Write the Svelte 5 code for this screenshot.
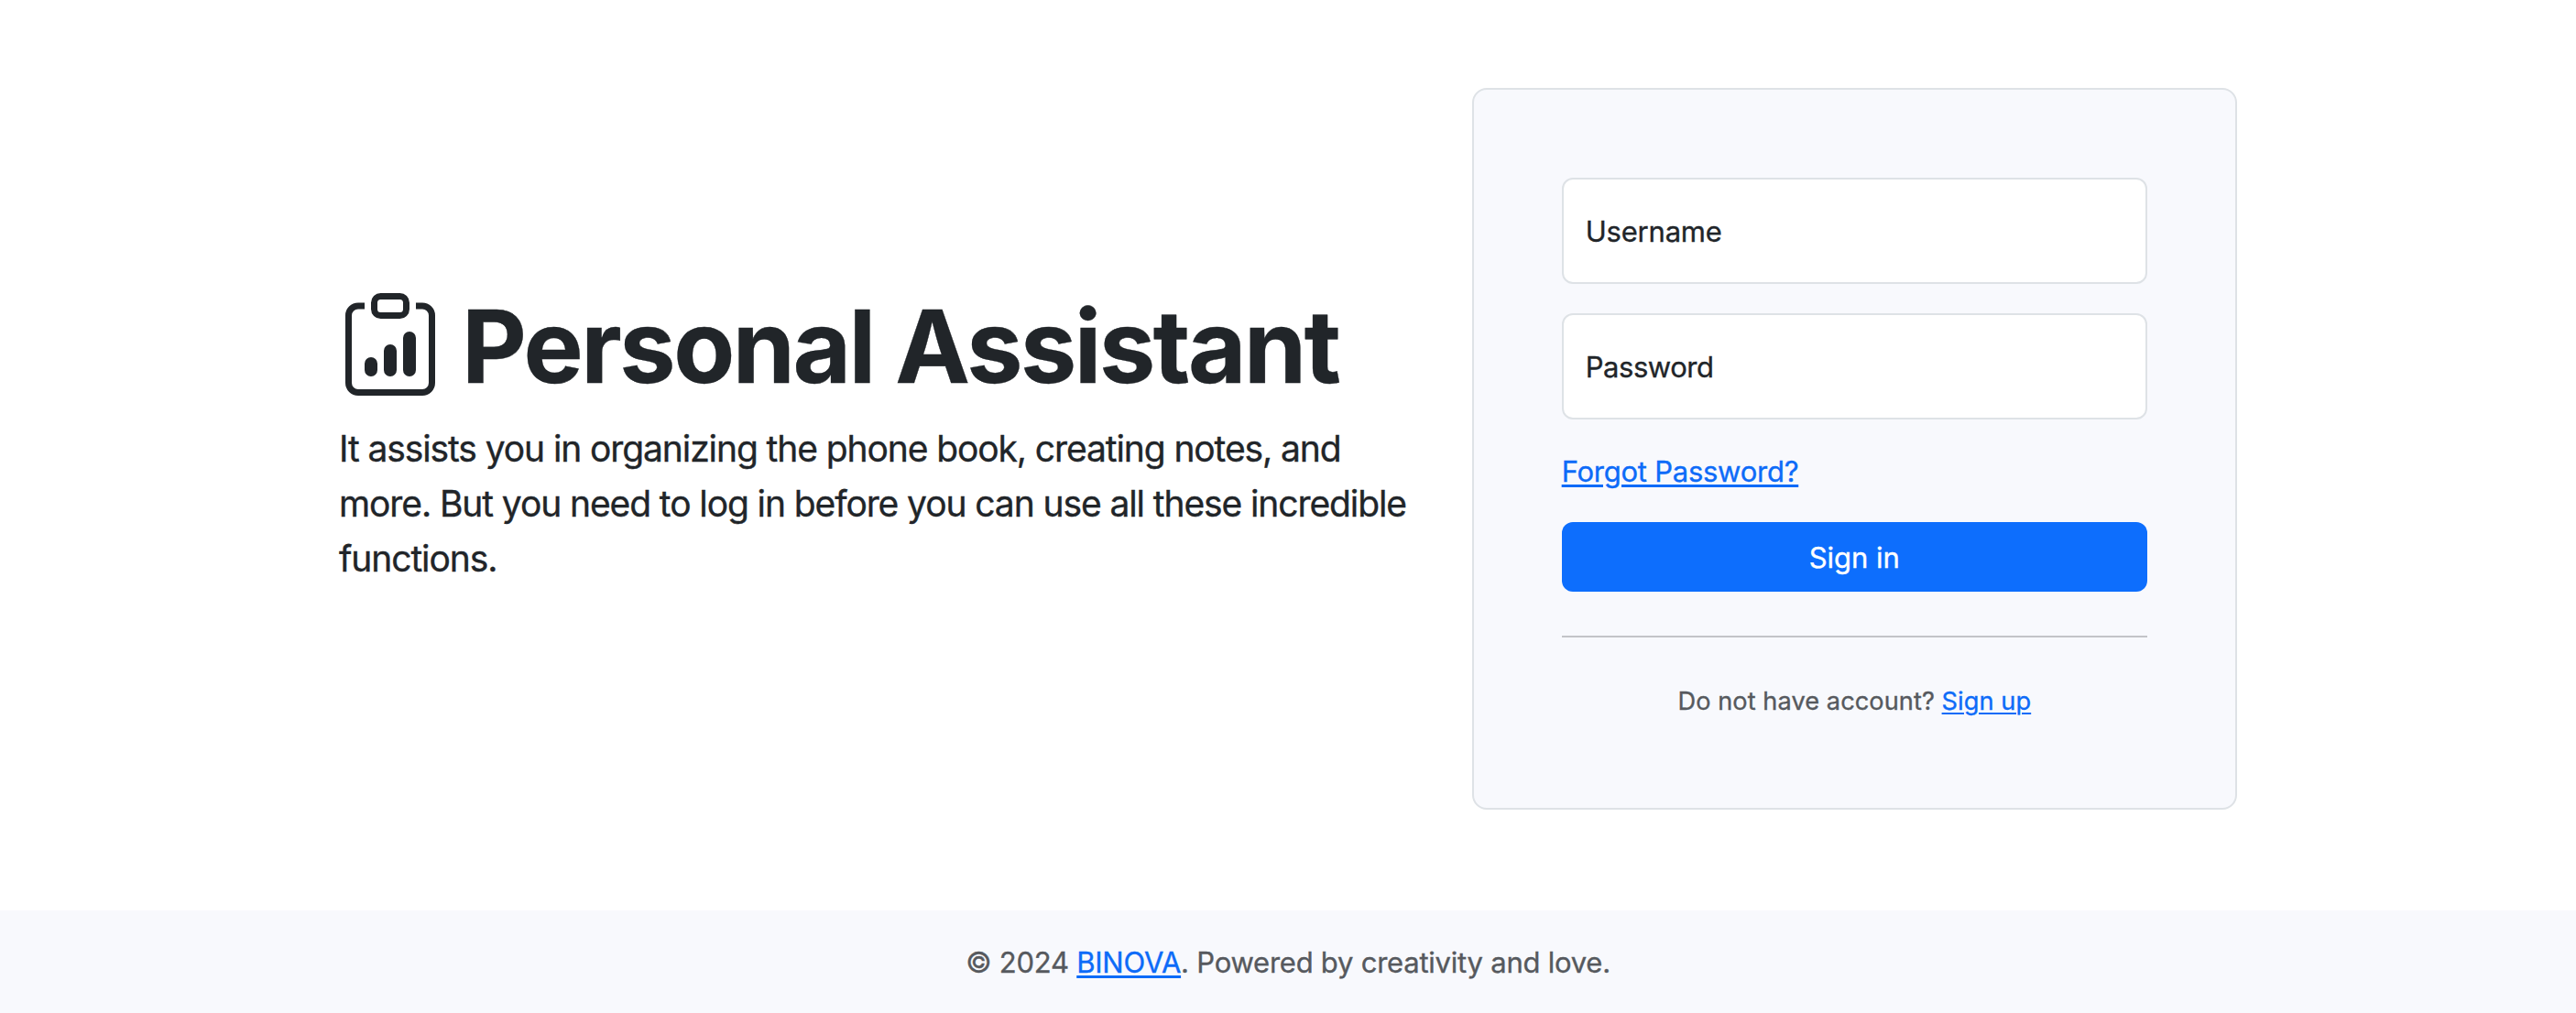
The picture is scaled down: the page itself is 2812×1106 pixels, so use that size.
<script>
  let username = $state('');
  let password = $state('');
</script>

<div class="page">
  <main class="row">
    <section class="intro">
      <h1>
        <svg width="112" height="112" viewBox="0 0 16 16" fill="currentColor" aria-hidden="true">
          <path d="M4 11a1 1 0 1 1 2 0v1a1 1 0 1 1-2 0zm6-4a1 1 0 1 1 2 0v5a1 1 0 1 1-2 0zM7 9a1 1 0 0 1 2 0v3a1 1 0 1 1-2 0z" />
          <path d="M4 1.5H3a2 2 0 0 0-2 2V14a2 2 0 0 0 2 2h10a2 2 0 0 0 2-2V3.5a2 2 0 0 0-2-2h-1v1h1a1 1 0 0 1 1 1V14a1 1 0 0 1-1 1H3a1 1 0 0 1-1-1V3.5a1 1 0 0 1 1-1h1z" />
          <path d="M9.5 1a.5.5 0 0 1 .5.5v1a.5.5 0 0 1-.5.5h-3a.5.5 0 0 1-.5-.5v-1a.5.5 0 0 1 .5-.5zm-3-1A1.5 1.5 0 0 0 5 1.5v1A1.5 1.5 0 0 0 6.5 4h3A1.5 1.5 0 0 0 11 2.5v-1A1.5 1.5 0 0 0 9.5 0z" />
        </svg>
        <span>Personal Assistant</span>
      </h1>
      <p>
        It assists you in organizing the phone book, creating notes, and more. But you need to log in
        before you can use all these incredible functions.
      </p>
    </section>

    <form class="card" onsubmit={(e) => e.preventDefault()}>
      <input class="field user" type="text" placeholder="Username" aria-label="Username" bind:value={username} />
      <input class="field pass" type="password" placeholder="Password" aria-label="Password" bind:value={password} />
      <div class="forgot"><a href="#forgot">Forgot Password?</a></div>
      <button type="submit">Sign in</button>
      <hr />
      <small>Do not have account? <a href="#signup">Sign up</a></small>
    </form>
  </main>

  <footer>© 2024 <a href="#binova">BINOVA</a>. Powered by creativity and love.</footer>
</div>

<style>
  :global(body) {
    margin: 0;
    background: #fff;
  }

  .page {
    display: flex;
    flex-direction: column;
    box-sizing: border-box;
    height: 1106px;
    overflow: hidden;
    color: #212529;
    font: 400 31px/48px Inter, 'Liberation Sans', sans-serif;
    -webkit-text-stroke: 0.35px currentColor;
  }

  .row {
    display: grid;
    grid-template-columns: 1188.67px 835.33px;
    column-gap: 48px;
    width: 2072px;
    margin: 0 auto;
    padding-top: 96px;
    flex: 1;
    align-items: start;
  }

  .intro {
    display: flex;
    flex-direction: column;
    justify-content: center;
    box-sizing: border-box;
    height: 788px;
    padding-bottom: 20px;
  }

  h1 {
    display: flex;
    gap: 22px;
    height: 112px;
    margin: 0 0 28px;
    font-size: 109.5px;
    font-weight: 700;
    line-height: 117px;
    letter-spacing: -2.5px;
    white-space: nowrap;
  }

  h1 svg {
    flex: none;
  }

  p {
    margin: 0;
    font-size: 39px;
    line-height: 60px;
    letter-spacing: -1.1px;
  }

  a {
    color: #0d6bf8;
    text-decoration: underline;
    text-decoration-thickness: 3px;
    text-underline-offset: 3px;
  }

  .card {
    display: flex;
    flex-direction: column;
    box-sizing: border-box;
    height: 788px;
    padding: 96px;
    border: 2px solid #dee2e6;
    border-radius: 16px;
    background: #f8f9fd;
  }

  .field {
    flex: none;
    box-sizing: border-box;
    width: 100%;
    height: 116px;
    margin: 0 0 32px;
    padding: 32px 24px;
    border: 2px solid #dee2e6;
    border-radius: 12px;
    background: #fff;
    color: #212529;
    font: inherit;
    outline: none;
  }

  .user {
    letter-spacing: -0.2px;
  }

  .pass {
    letter-spacing: -0.45px;
  }

  .field::placeholder {
    color: #212529;
    opacity: 1;
  }

  .forgot {
    box-sizing: border-box;
    height: 48px;
    margin-bottom: 32px;
    padding-top: 1px;
    letter-spacing: -0.25px;
  }

  button {
    flex: none;
    height: 76px;
    padding: 1px 0 0;
    border: 0;
    border-radius: 12px;
    background: #0d6efd;
    color: #fff;
    font: inherit;
    letter-spacing: 0;
  }

  hr {
    flex: none;
    width: 100%;
    height: 2px;
    margin: 48px 0;
    border: 0;
    background: #c3c4c8;
  }

  small {
    padding-top: 1px;
    color: #56595e;
    font-size: 27.2px;
    line-height: 42px;
    letter-spacing: 0.06px;
    text-align: center;
  }

  small a {
    text-decoration-thickness: 2px;
  }

  footer {
    flex: none;
    padding: 33px 0 31px;
    background: #f8f9fd;
    color: #56595e;
    letter-spacing: -0.235px;
    text-align: center;
  }
</style>
